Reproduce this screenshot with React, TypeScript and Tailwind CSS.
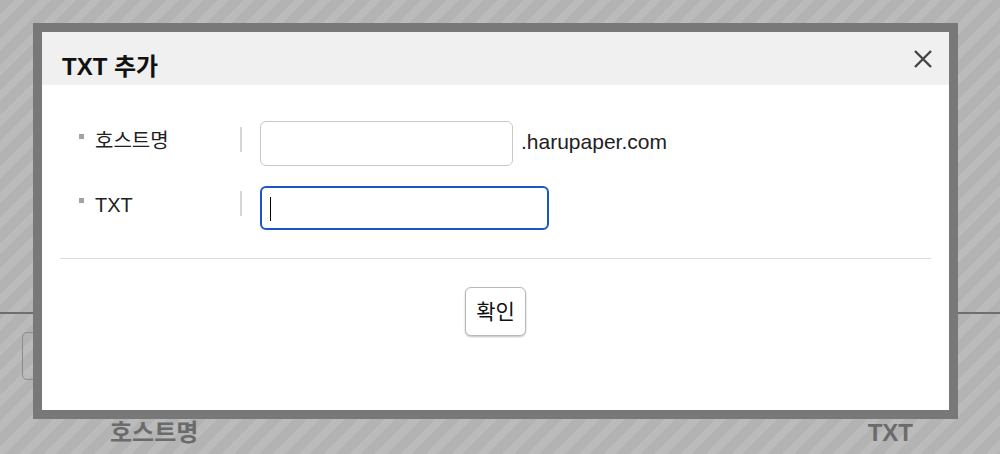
import React from "react";

const stripes =
  "bg-[repeating-linear-gradient(135deg,#b3b3b3_0px,#b3b3b3_10px,#bbbbbb_10px,#bbbbbb_18px)]";

const FormRow = ({ label, children }: { label: string; children: React.ReactNode }) => {
  return (
    <div className="flex h-[45px] items-center">
      <div className="flex w-[161px] -translate-y-[3px] items-center">
        <span className="mr-[11px] h-[5px] w-[5px] -translate-y-[4px] bg-[#a3a3a3]" />
        <span className="text-[20px] leading-none text-[#222]">{label}</span>
      </div>
      <div className="h-[25px] w-[2px] -translate-y-[4px] bg-[#d6d6d6]" />
      <div className="ml-[18px] flex items-center">{children}</div>
    </div>
  );
};

const TxtAddModal = () => {
  return (
    <div className="absolute left-[33px] top-[23px] flex h-[396px] w-[925px] flex-col border-[9px] border-[#787878] bg-white">
      <div className="flex h-[53px] items-start justify-between bg-[#f0f0f0] pl-[20px] pr-[16px]">
        <h2 className="pt-[21px] text-[24px] font-bold leading-[28px] text-[#111]">TXT 추가</h2>
        <button className="self-center text-[#444]" aria-label="close">
          <svg width="20" height="20" viewBox="0 0 20 20">
            <path d="M2 2 L18 18 M18 2 L2 18" stroke="currentColor" strokeWidth="2.4" />
          </svg>
        </button>
      </div>

      <div className="flex flex-col gap-[19px] pl-[37px] pt-[36px]">
        <FormRow label="호스트명">
          <input className="h-[45px] w-[253px] rounded-[6px] border border-[#c8c8c8] bg-white px-[9px] text-[18px] outline-none" />
          <span className="ml-[8px] -translate-y-[2px] text-[21px] text-[#222]">.harupaper.com</span>
        </FormRow>
        <FormRow label="TXT">
          <div className="relative">
            <input className="h-[44px] w-[289px] rounded-[6px] border-2 border-[#1c55c7] bg-white px-[9px] text-[18px] caret-transparent outline-none" />
            <span className="absolute left-[10px] top-[11px] h-[24px] w-px bg-black" />
          </div>
        </FormRow>
      </div>

      <div className="mx-[18px] mt-[28px] h-px bg-[#dcdcdc]" />

      <div className="flex justify-center pt-[28px]">
        <button className="h-[49px] w-[61px] rounded-[6px] border border-[#b9b9b9] bg-white text-[21px] text-[#111] shadow-[0_1px_2px_rgba(0,0,0,0.25)]">
          확인
        </button>
      </div>
    </div>
  );
};

const App = () => {
  return (
    <div
      className={`relative h-[454px] w-[1000px] overflow-hidden font-['Liberation_Sans','Noto_Sans_CJK_KR',sans-serif] ${stripes}`}
    >
      {/* page under the overlay */}
      <div className="pt-[312px]">
        <div className="h-[2px] bg-[#6e6e6e]" />
        <div className="pl-[22px] pt-[18px]">
          <div className="flex h-[48px] w-[40px] items-center justify-end rounded-[5px] border border-[#8c8c8c]">
            <span className="mr-[6px] h-[2px] w-[2px] bg-[#666]" />
          </div>
        </div>
        <div className="flex justify-between pl-[110px] pr-[87px] pt-[41px] text-[24px] font-bold leading-none text-[#6b6b6b]">
          <span>호스트명</span>
          <span>TXT</span>
        </div>
      </div>

      <TxtAddModal />
    </div>
  );
};

export default App;
